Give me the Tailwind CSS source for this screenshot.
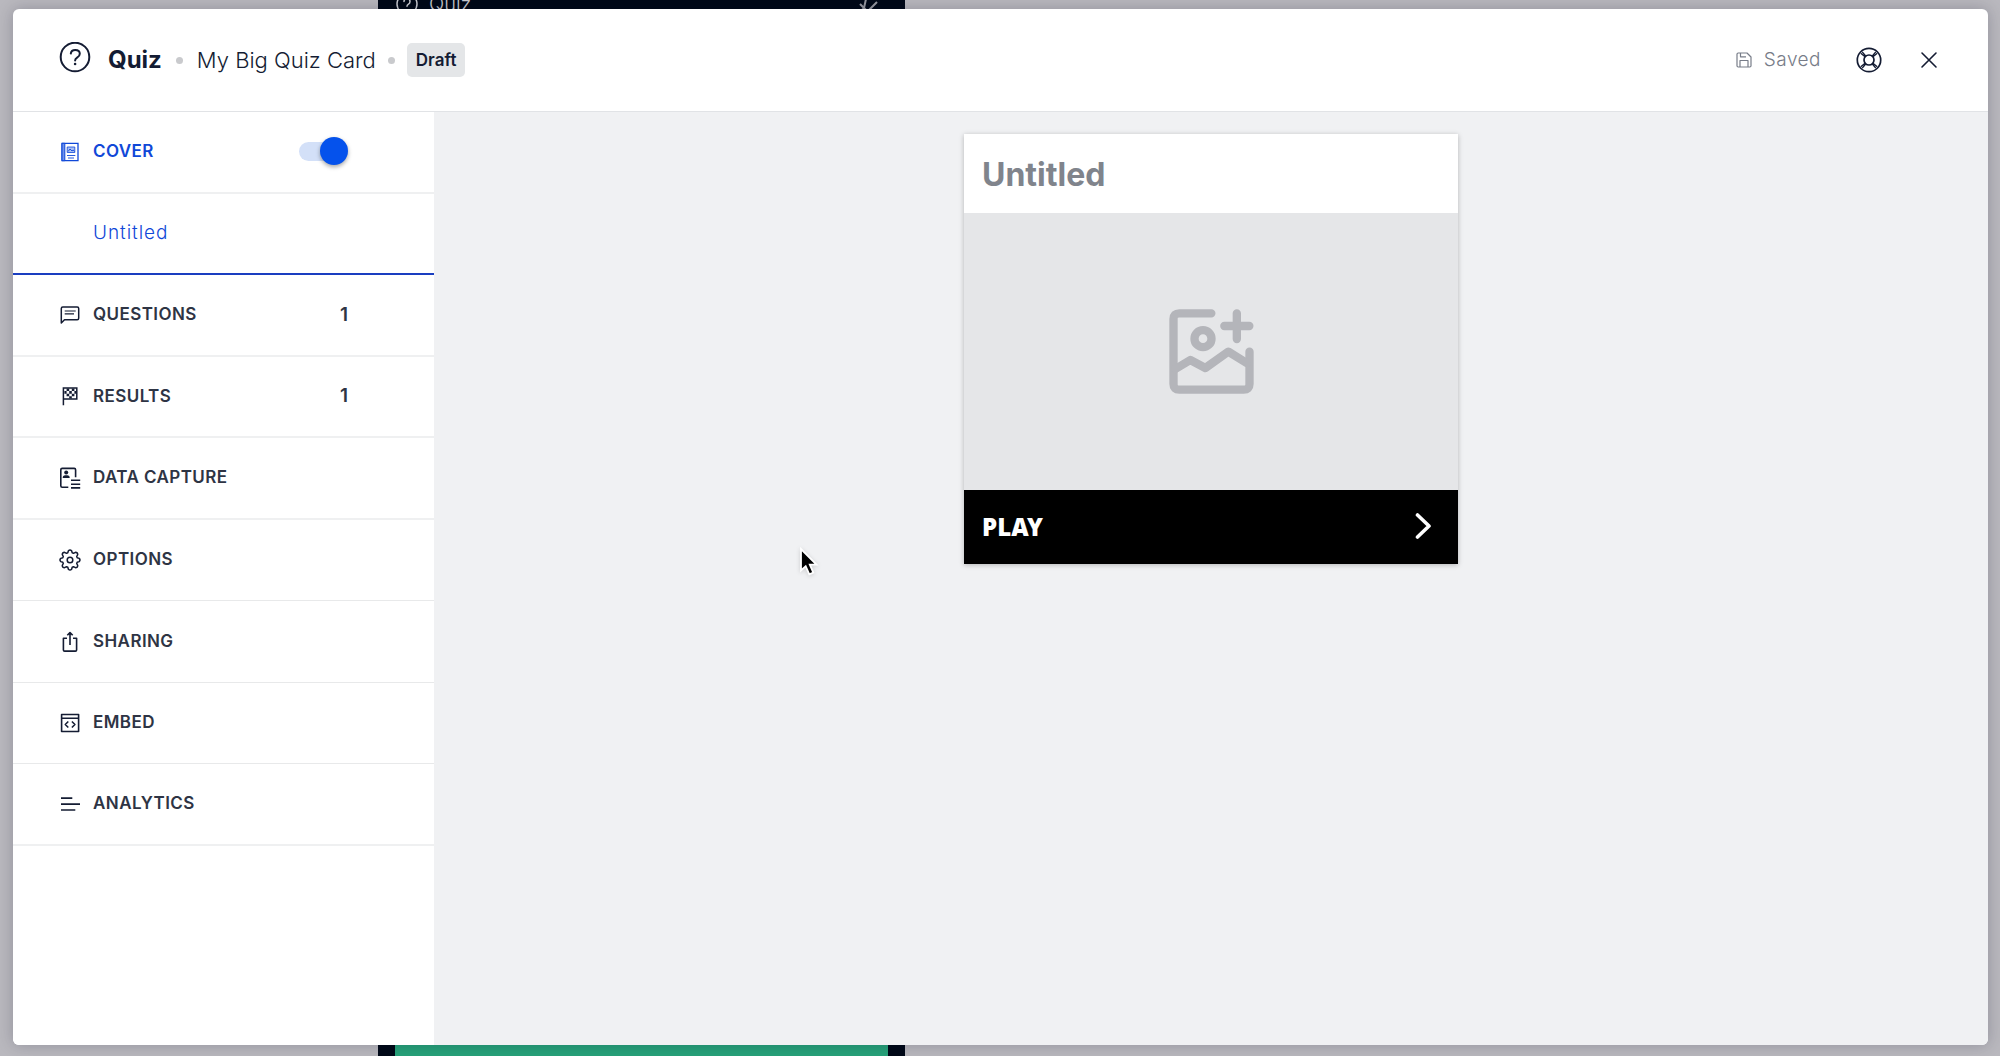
<!DOCTYPE html>
<html lang="en">
<head>
  <meta charset="UTF-8" />
  <meta name="viewport" content="width=device-width, initial-scale=1.0" />
  <title>Quiz | My Big Quiz Card</title>

  <script src="https://cdn.jsdelivr.net/npm/@tailwindcss/browser@4"></script>
</head>
<body class="h-screen overflow-hidden bg-[#b9b8be] font-['Inter',sans-serif] text-[#141c33]">

  <!-- Page behind the dialog -->
  <div class="absolute inset-y-0 left-[378px] w-[527px] bg-[#000918] px-[17px] flex flex-col justify-between overflow-hidden" aria-hidden="true">
    <div class="-mt-2.5 h-7 flex items-center gap-2.5 text-[#c9cbd1]">
      <svg class="size-6" viewBox="0 0 24 24" fill="none" stroke="currentColor" stroke-width="1.500">
        <circle cx="12" cy="12" r="10" />
        <path d="M9 9.500a3 3 0 1 1 4.500 2.600c-1 .6-1.500 1-1.500 2.200" stroke-linecap="round" />
      </svg>
      <span class="text-xl font-light">Quiz</span>
      <svg class="ml-auto mr-2 size-6 text-[#9799a1]" viewBox="0 0 24 24" fill="none" stroke="currentColor" stroke-width="2">
        <path d="M4 12l9 9M8 16l2-9M12 19l9-9M7 7l12-3M4 20l4-4" />
      </svg>
    </div>
    <div class="h-16 bg-[#27a27a]"></div>
  </div>

  <!-- Editor dialog -->
  <div class="relative h-full pt-[9px] pb-[11px] pl-[13px] pr-3">
    <div role="dialog" aria-label="Quiz editor" class="h-full flex flex-col overflow-hidden rounded-md bg-white shadow-[0_0_16px_rgba(0,10,30,0.22)]">

      <header class="h-[103px] shrink-0 flex items-center border-b border-[#e1e3e6] pl-[46px] pr-[47px]">
        <svg class="w-8 h-9 mr-[17px]" viewBox="0 0 32 36" fill="none" stroke="currentColor" stroke-width="2" stroke-linecap="round">
          <circle cx="16" cy="15" r="14.300" />
          <path d="M11.800 11.500c.3-2.200 2-3.600 4.400-3.600 2.600 0 4.600 1.500 4.600 3.800 0 1.900-1 2.900-2.700 3.900-1.500.9-2 1.500-2 3" />
          <circle cx="16.100" cy="22" r="1.300" fill="currentColor" stroke="none" />
        </svg>
        <h1 class="text-2xl font-bold">Quiz</h1>
        <span class="mx-3.5 size-[7px] rounded-full bg-[#c9cacd]"></span>
        <p class="text-[22px] font-light">My Big Quiz Card</p>
        <span class="mx-3 size-[7px] rounded-full bg-[#c9cacd]"></span>
        <span class="rounded-[5px] bg-[#e4e6e8] px-[9px] h-[34px] leading-[34px] text-[17px] font-semibold">Draft</span>

        <div class="ml-auto flex items-center gap-3 text-[#777c88]">
          <svg class="size-4" viewBox="0 0 16 16" fill="none" stroke="currentColor" stroke-width="1.200" stroke-linejoin="round">
            <path d="M1 2.200Q1 1 2.200 1H11l4 4v8.800q0 1.200-1.200 1.200H2.200Q1 15 1 13.800zM4 15V8.500h8V15M4.500 1v3.800H10" />
          </svg>
          <span class="text-[19px] font-light tracking-wide">Saved</span>
        </div>
        <button type="button" aria-label="Help" class="ml-[34px]">
          <svg class="size-7" viewBox="0 0 28 28" fill="none" stroke="currentColor" stroke-width="1.700">
            <circle cx="14" cy="14" r="11.700" />
            <circle cx="14" cy="14" r="5" />
            <path d="M5.800 7.200l4.200 3.500M7.200 5.800l3.500 4.200M22.200 7.200L18 10.700M20.800 5.800L17.300 10M5.800 20.800l4.200-3.500M7.200 22.200l3.500-4.200M22.200 20.800L18 17.300M20.800 22.200L17.300 18" stroke-width="1.300" />
          </svg>
        </button>
        <button type="button" aria-label="Close" class="ml-[34px]">
          <svg class="size-6" viewBox="0 0 24 24" fill="none" stroke="currentColor" stroke-width="1.600" stroke-linecap="round">
            <path d="M5 5l14 14M19 5L5 19" />
          </svg>
        </button>
      </header>

      <div class="flex flex-1 min-h-0">
        <!-- Sidebar -->
        <aside class="w-[421px] shrink-0 bg-white">
          <nav class="grid h-[734px] auto-rows-fr text-[17px] font-semibold tracking-wide text-[#2e3444]">
            <div class="flex items-center border-b-2 border-[#eff0f1] pl-[45px] pr-[86px] text-[#1048d8]">
              <a href="#cover" class="flex items-center gap-[11px]">
                <svg class="size-6" viewBox="0 0 24 24" fill="none" stroke="currentColor" stroke-width="1.300">
                  <path d="M4 3.300h16v17.400H4z" />
                  <path d="M4 3.300h2.800v17.400H4z" fill="#6f92ec" stroke-width="1" />
                  <path d="M9.200 7h7.600v5.500H9.200z" fill="#a9bff5" stroke-width=".8" />
                  <path d="M10 11.500l2-2.500 2 2 1.200-1 1.300 1.500M9 15.500h8.300M10 18h6" stroke-width=".9" />
                </svg>
                COVER
              </a>
              <input type="checkbox" checked aria-label="Show cover" class="relative ml-auto h-[19px] w-[49px] appearance-none rounded-full before:absolute before:inset-y-0 before:left-0 before:w-10 before:rounded-full before:bg-[#d3e0f8] after:absolute after:right-0 after:-top-[5px] after:size-7 after:rounded-full after:bg-[#0552ec] after:shadow-[0_2px_4px_rgba(0,0,0,0.35)]" />
            </div>
            <a href="#untitled" class="flex items-center border-b-2 border-[#1a3ec0] pl-20 text-[19px] font-light tracking-wider text-[#1048d8]">Untitled</a>
            <a href="#questions" class="flex items-center gap-[11px] border-b-2 border-[#eff0f1] pl-[45px] pr-[86px]">
              <svg class="size-6" viewBox="0 0 24 24" fill="none" stroke="#141c33" stroke-width="1.500" stroke-linejoin="round">
                <path d="M3.300 20V5.500Q3.300 4 4.800 4h14.400q1.500 0 1.500 1.500v9.700q0 1.500-1.500 1.500H6.500z" />
                <path d="M6.700 8h11M6.700 10.800H16" stroke-width="1.200" />
              </svg>
              QUESTIONS
              <span class="ml-auto text-[19px] tracking-normal">1</span>
            </a>
            <a href="#results" class="flex items-center gap-[11px] border-b-2 border-[#eff0f1] pl-[45px] pr-[86px]">
              <svg class="size-6" viewBox="0 0 24 24" fill="none" stroke="#141c33" stroke-width="1.500">
                <path d="M5.400 21.300V4h13.400v11H5.400" />
                <path d="M8.600 4.500h2.600v2.600H8.600zM13.800 4.500h2.600v2.600h-2.600zM11.200 7.100h2.600v2.600h-2.600zM16.400 7.100h2v2.600h-2zM6.400 7.100h2.200v2.600H6.400zM8.600 9.700h2.600v2.600H8.600zM13.800 9.700h2.600v2.600h-2.600zM11.200 12.300h2.600v2.200h-2.600z" fill="#141c33" stroke="none" />
              </svg>
              RESULTS
              <span class="ml-auto text-[19px] tracking-normal">1</span>
            </a>
            <a href="#data-capture" class="flex items-center gap-[11px] border-b-2 border-[#eff0f1] pl-[45px]">
              <svg class="size-6" viewBox="0 0 24 24" fill="none" stroke="#141c33" stroke-width="1.600">
                <path d="M10.300 21.200H4.200q-1.400 0-1.400-1.400V3.800q0-1.400 1.400-1.400h12q1.400 0 1.400 1.400v7.500" />
                <path d="M13 14.300h9.200M13 18.200h9.200M13 21.900h9.200" />
                <path d="M4.700 12q0-2.700 2.500-2.700h2q2.500 0 2.500 2.700z" fill="#141c33" stroke="none" />
                <circle cx="8.200" cy="6.600" r="2" fill="#141c33" stroke="none" />
              </svg>
              DATA CAPTURE
            </a>
            <a href="#options" class="flex items-center gap-[11px] border-b border-[#e8e9ea] pl-[45px]">
              <svg class="size-6" viewBox="0 0 24 24" fill="none" stroke="#141c33" stroke-width="1.500" stroke-linejoin="round">
                <path d="M10.400 2.800q1.600-1.600 3.200 0l.6 2 1.300.5 1.900-1q2.300 0 2.300 2.300l-1 1.900.5 1.300 2 .6q1.600 1.600 0 3.200l-2 .6-.5 1.300 1 1.900q0 2.300-2.300 2.300l-1.900-1-1.300.5-.6 2q-1.600 1.600-3.200 0l-.6-2-1.300-.5-1.900 1q-2.300 0-2.300-2.300l1-1.900-.5-1.300-2-.6q-1.600-1.600 0-3.200l2-.6.5-1.300-1-1.900q0-2.300 2.300-2.300l1.900 1 1.300-.5z" />
                <circle cx="12" cy="12" r="2.800" />
              </svg>
              OPTIONS
            </a>
            <a href="#sharing" class="flex items-center gap-[11px] border-b border-[#e8e9ea] pl-[45px]">
              <svg class="size-6" viewBox="0 0 24 24" fill="none" stroke="#141c33" stroke-width="1.600" stroke-linejoin="round">
                <path d="M9 8.300H5.400v11.600q0 1.200 1.200 1.200h10.800q1.200 0 1.200-1.200V8.300H15" />
                <path d="M12 15V3M9.300 5.300L12 2.600l2.700 2.700" />
              </svg>
              SHARING
            </a>
            <a href="#embed" class="flex items-center gap-[11px] border-b border-[#e8e9ea] pl-[45px]">
              <svg class="size-6" viewBox="0 0 24 24" fill="none" stroke="#141c33" stroke-width="1.600" stroke-linejoin="round">
                <path d="M3.600 3.500h17v17h-17zM3.600 7.300h17" />
                <path d="M10.300 10.500l-3 3 3 3M13.900 10.500l3 3-3 3" />
              </svg>
              EMBED
            </a>
            <a href="#analytics" class="flex items-center gap-[11px] border-b-2 border-[#eff0f1] pl-[45px]">
              <svg class="size-6" viewBox="0 0 24 24" fill="none" stroke="#141c33" stroke-width="1.700">
                <path d="M3 6.200h11.300M3 12.200h19M3 18h14.300" />
              </svg>
              ANALYTICS
            </a>
          </nav>
        </aside>

        <!-- Card preview -->
        <main class="flex flex-1 items-start justify-center bg-[#f0f1f3] pt-[22px]">
          <article class="w-[494px] bg-white shadow-[0_1px_5px_rgba(0,0,0,0.25)]">
            <input type="text" aria-label="Card title" placeholder="Untitled" class="block h-[79px] w-full px-[18px] pt-0.5 text-[32px] font-bold outline-none placeholder:text-[#80848c]" />
            <button type="button" aria-label="Add image" class="flex h-[277px] w-full items-center justify-center bg-[#e5e6e8] text-[#b4b5ba]">
              <svg class="size-[85px]" viewBox="0 0 253 255" fill="none" stroke="currentColor" stroke-width="25" stroke-linecap="round" stroke-linejoin="round">
                <path d="M126 13H30Q12.500 13 12.500 30v195q0 17 17.500 17h193q17.500 0 17.500-17v-97" />
                <path d="M202.500 13v77M165 51h75" />
                <circle cx="101" cy="89" r="25.500" />
                <path d="M18 180l45-27 45 24 69-49 55 34" />
              </svg>
            </button>
            <button type="button" class="flex h-[74px] w-full items-center justify-between bg-black pl-[18px] pr-[21px] font-['Noto_Sans',sans-serif] text-2xl font-black text-white">
              PLAY
              <svg class="size-7" viewBox="0 0 28 28" fill="none" stroke="currentColor" stroke-width="3.600" stroke-linecap="round" stroke-linejoin="round">
                <path d="M8.500 2L20 13 8.500 24" />
              </svg>
            </button>
          </article>
        </main>
      </div>
    </div>
  </div>

  <!-- Mouse pointer -->
  <svg class="pointer-events-none absolute left-[799px] top-[547px] h-[30px] w-5 drop-shadow-sm" viewBox="0 0 20 30" fill="#000" stroke="#fff" stroke-width="1.800">
    <path d="M2 2v21.500l4.700-4.300 3.600 8.200 4-1.800-3.500-7.900h6.700z" />
  </svg>
</body>
</html>
